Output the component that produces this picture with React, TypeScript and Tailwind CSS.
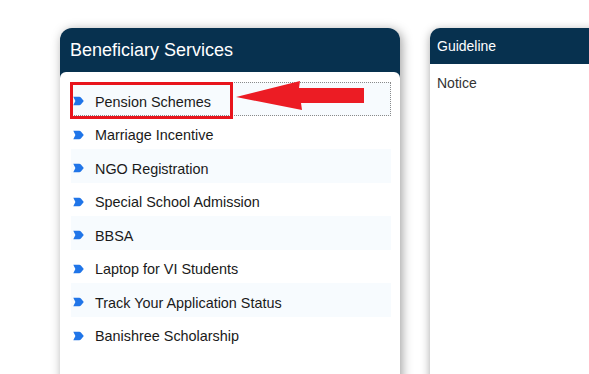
import React from "react";

const items = [
  "Pension Schemes",
  "Marriage Incentive",
  "NGO Registration",
  "Special School Admission",
  "BBSA",
  "Laptop for VI Students",
  "Track Your Application Status",
  "Banishree Scholarship",
];

function Bullet() {
  return (
    <svg width="11" height="10" viewBox="0 0 11 10" className="shrink-0 mt-[5px]">
      <path d="M0.3 0.8 H6.2 Q7.2 0.8 7.9 1.6 L10.8 5 L7.9 8.4 Q7.2 9.2 6.2 9.2 H0.3 L2.4 5 Z" fill="#2075e8" />
    </svg>
  );
}

export default function App() {
  return (
    <div
      className="w-[589px] h-[374px] overflow-hidden bg-white flex items-start pl-[60px] pt-[28px] gap-[30px]"
      style={{ fontFamily: '"Liberation Sans", Arial, sans-serif' }}
    >
      {/* Left card */}
      <div className="relative w-[340px] h-[420px] shrink-0 rounded-t-[12px] bg-[#07314f] shadow-[2px_2px_11px_rgba(0,0,0,0.38)] flex flex-col">
        <div className="h-[44px] flex items-center pl-[10px] text-white text-[18px] leading-none">
          Beneficiary Services
        </div>
        <div className="flex-1 bg-white rounded-t-[6px] pt-[10px] pl-[11px] pr-[9px]">
          {items.map((t, i) => (
            <div
              key={t}
              className={`h-[33.5px] flex items-center pl-[2px] gap-[11px] text-[14.4px] text-[#1a1a1a] ${
                i % 2 === 0 ? "bg-[#f7fbfe]" : "bg-white"
              } ${i === 0 ? "outline outline-1 outline-dotted outline-[#8a8a8a] -outline-offset-1" : ""}`}
            >
              <Bullet />
              <span className="pt-[8px]">{t}</span>
            </div>
          ))}
        </div>
        {/* red highlight box */}
        <div className="absolute left-[10px] top-[54px] w-[163px] h-[37px] border-[3px] border-[#e8141c]" />
        {/* red arrow */}
        <svg
          className="absolute left-[176px] top-[50px]"
          width="130"
          height="34"
          viewBox="0 0 130 34"
        >
          <polygon
            points="0,19 64,3 63,10 128,10 128,25 65,25 66,32"
            fill="#ec1c24"
          />
        </svg>
      </div>

      {/* Right card */}
      <div className="w-[200px] h-[420px] shrink-0 rounded-t-[10px] bg-[#07314f] shadow-[0_2px_10px_rgba(0,0,0,0.35)] flex flex-col">
        <div className="h-[36px] flex items-center pl-[7px] text-white text-[14px] leading-none">
          Guideline
        </div>
        <div className="flex-1 bg-white pl-[7px] pt-[9px] text-[14px] text-[#333]">
          Notice
        </div>
      </div>
    </div>
  );
}
